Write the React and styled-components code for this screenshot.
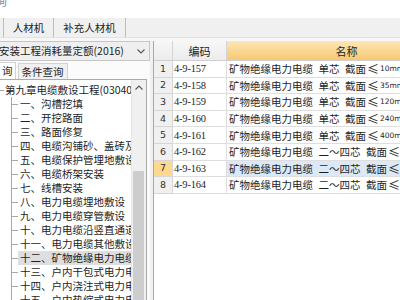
import styled, { createGlobalStyle } from 'styled-components'

const Global = createGlobalStyle`
    html, body {
        margin: 0;
        padding: 0;
        background: #fff;
    }
    * {
        box-sizing: border-box;
    }
`

const SPage = styled.div`
    width: 400px;
    height: 300px;
    overflow: hidden;
    display: flex;
    flex-direction: column;
    background: #f7f7f7;
    font-family: "Noto Sans CJK SC", "Noto Sans", sans-serif;
    font-size: 10.5px;
    color: #1e1e1e;
`

const STitleBar = styled.div`
    height: 18px;
    flex-shrink: 0;
    background: #fff;
    overflow: hidden;
`

const STitleText = styled.span`
    display: block;
    margin: -7px 0 0 -5px;
    font-size: 12px;
    line-height: 16px;
    color: #7d8ea6;
`

const SToolbar = styled.div`
    height: 20px;
    flex-shrink: 0;
    display: flex;
    background: #f0f0f0;
    border-bottom: 1px solid #e2e2e2;
`

const SToolTab = styled.div`
    width: ${props => props.w}px;
    display: flex;
    align-items: center;
    justify-content: center;
    border-right: 1px solid #bcbcbc;
    line-height: 20px;
    color: #222;
`

const SBody = styled.div`
    flex: 1;
    min-height: 0;
    display: flex;
    padding-top: 3px;
`

const SLeft = styled.div`
    width: 150px;
    flex-shrink: 0;
    display: flex;
    flex-direction: column;
    background: #fbfbfb;
`

const SCombo = styled.div`
    height: 20px;
    flex-shrink: 0;
    margin-left: -3px;
    display: flex;
    align-items: center;
    justify-content: space-between;
    padding: 0 4px 0 1px;
    background: #efefef;
    border: 1px solid #c6c6c6;
    white-space: nowrap;
    line-height: 18px;
`

const SQueryTabs = styled.div`
    height: 18px;
    flex-shrink: 0;
    display: flex;
    align-items: flex-end;
`

const SQueryTab = styled.div`
    height: ${props => (props.active ? 17 : 16)}px;
    display: flex;
    align-items: center;
    padding: 0 ${props => (props.active ? 2 : 3)}px;
    margin-right: 2px;
    background: ${props => (props.active ? '#fff' : '#f0f0f0')};
    border: 1px solid #d2d2d2;
    border-bottom: none;
    border-left: ${props => (props.active ? 'none' : '1px solid #d2d2d2')};
    line-height: 16px;
`

const STreeBox = styled.div`
    flex: 1;
    min-height: 0;
    margin: 0 3px 0 -1px;
    display: flex;
    background: #fff;
    border: 1px solid #aaaaaa;
    border-bottom: none;
`

const STree = styled.div`
    flex: 1;
    min-width: 0;
    overflow: hidden;
    padding-top: 3px;
`

const STreeRow = styled.div`
    height: 14px;
    display: flex;
    align-items: stretch;
    white-space: nowrap;
    line-height: 14px;
`

const SBranch = styled.span`
    flex-shrink: 0;
    width: ${props => (props.root ? 4 : 7)}px;
    margin-left: ${props => (props.root ? 0 : 11)}px;
    border-left: ${props => (props.root ? 'none' : '1px solid #a8a8a8')};
    background: linear-gradient(#a8a8a8, #a8a8a8) no-repeat left center / 100% 1px;
`

const SLabel = styled.span`
    padding: 0 2px 0 ${props => (props.root ? 1 : 2)}px;
    background: ${props => (props.selected ? '#dedede' : 'transparent')};
`

const SScroll = styled.div`
    width: 15px;
    flex-shrink: 0;
    display: flex;
    flex-direction: column;
    background: #f0f0f0;
    border-left: 1px solid #e6e6e6;
`

const SScrollArrow = styled.div`
    height: 15px;
    display: flex;
    align-items: center;
    justify-content: center;
`

const SThumb = styled.div`
    flex: 1;
    margin: 76px 2px 0 1px;
    background: #cdcdcd;
`

const SSplitter = styled.div`
    width: 3px;
    flex-shrink: 0;
    background: #f0f0f0;
`

const SRight = styled.div`
    flex: 1;
    min-width: 0;
    overflow: hidden;
    background: #fff;
    border-left: 1px solid #a9a9a9;
`

const STable = styled.div`
    display: grid;
    grid-template-columns: 19px 54px 240px;
    grid-auto-rows: 16.6px;
    grid-template-rows: 20px;
`

const SHeadCell = styled.div`
    display: flex;
    align-items: center;
    justify-content: center;
    border-right: 1px solid #d4d4d4;
    border-bottom: 1px solid #d0d0d0;
    background: ${props => props.active
        ? 'linear-gradient(#fde7b4, #f6c872)'
        : 'linear-gradient(#f7f7f7, #ececec)'};
    white-space: nowrap;
    font-size: 11px;
`

const SNumCell = styled.div`
    display: flex;
    align-items: center;
    justify-content: center;
    background: ${props => (props.active ? '#fdd88d' : '#f0f0f0')};
    border-right: 1px solid #d6d6d6;
    border-bottom: 1px solid #d6d6d6;
    font-family: "DejaVu Sans", sans-serif;
    font-size: 9.5px;
    line-height: 12px;
    color: #333;
`

const SCell = styled.div`
    display: flex;
    align-items: center;
    padding-left: ${props => props.pad}px;
    overflow: hidden;
    white-space: nowrap;
    background: ${props => (props.active ? '#dbe8f6' : '#fff')};
    border-right: 1px solid #dedede;
    border-bottom: 1px solid #dedede;
    line-height: 15px;
`

const SCode = styled.span`
    font-family: "Liberation Serif", serif;
    font-size: 10.5px;
    letter-spacing: -0.2px;
`

const SWord = styled.span`
    margin-left: 5.5px;
`

const SLe = styled.span`
    font-size: 12px;
    margin-left: 1px;
`

const SSmall = styled.span`
    font-family: "DejaVu Sans", sans-serif;
    font-size: 7.5px;
    margin-left: 1px;
`

const Chevron = ({up}) => (
    <svg width="8" height="5" viewBox="0 0 8 5">
        <path d={up ? 'M0.5 4.5 L4 1 L7.5 4.5' : 'M0.5 0.5 L4 4 L7.5 0.5'} fill="none" stroke="#555" strokeWidth="1.1" />
    </svg>
)

const treeItems = [
    '一、沟槽挖填',
    '二、开挖路面',
    '三、路面修复',
    '四、电缆沟铺砂、盖砖及移动盖板',
    '五、电缆保护管埋地敷设',
    '六、电缆桥架安装',
    '七、线槽安装',
    '八、电力电缆埋地敷设',
    '九、电力电缆穿管敷设',
    '十、电力电缆沿竖直通道敷设',
    '十一、电力电缆其他敷设',
    '十二、矿物绝缘电力电缆',
    '十三、户内干包式电力电缆头',
    '十四、户内浇注式电力电缆头',
    '十五、户内热缩式电力电缆头',
]

const rows = [
    {code: '4-9-157', core: '单芯', size: '10mm2'},
    {code: '4-9-158', core: '单芯', size: '35mm2'},
    {code: '4-9-159', core: '单芯', size: '120mm2'},
    {code: '4-9-160', core: '单芯', size: '240mm2'},
    {code: '4-9-161', core: '单芯', size: '400mm2'},
    {code: '4-9-162', core: '二～四芯', size: '6mm2'},
    {code: '4-9-163', core: '二～四芯', size: '16mm2'},
    {code: '4-9-164', core: '二～四芯', size: '25mm2'},
]

const App = () => {
    const tree = treeItems.map((text, i) => (
        <STreeRow key={text}>
            <SBranch />
            <SLabel selected={i === 11}>{text}</SLabel>
        </STreeRow>
    ))

    const body = rows.map(({code, core, size}, i) => {
        const active = i === 6
        return [
            <SNumCell key={`n${i}`} active={active}>{i + 1}</SNumCell>,
            <SCell key={`c${i}`} pad={1}><SCode>{code}</SCode></SCell>,
            <SCell key={`m${i}`} pad={2} active={active}>
                矿物绝缘电力电缆<SWord>{core}</SWord><SWord>截面</SWord><SLe>≤</SLe><SSmall>{size}</SSmall>
            </SCell>,
        ]
    })

    return (
        <SPage>
            <Global />
            <STitleBar>
                <STitleText>询</STitleText>
            </STitleBar>
            <SToolbar>
                <SToolTab w={4} />
                <SToolTab w={50}>人材机</SToolTab>
                <SToolTab w={72}>补充人材机</SToolTab>
            </SToolbar>
            <SBody>
                <SLeft>
                    <SCombo>
                        <span>安装工程消耗量定额(2016)</span>
                        <Chevron />
                    </SCombo>
                    <SQueryTabs>
                        <SQueryTab active>询</SQueryTab>
                        <SQueryTab>条件查询</SQueryTab>
                    </SQueryTabs>
                    <STreeBox>
                        <STree>
                            <STreeRow>
                                <SBranch root />
                                <SLabel root>第九章电缆敷设工程(030408)</SLabel>
                            </STreeRow>
                            {tree}
                        </STree>
                        <SScroll>
                            <SScrollArrow><Chevron up /></SScrollArrow>
                            <SThumb />
                        </SScroll>
                    </STreeBox>
                </SLeft>
                <SSplitter />
                <SRight>
                    <STable>
                        <SHeadCell />
                        <SHeadCell>编码</SHeadCell>
                        <SHeadCell active>名称</SHeadCell>
                        {body}
                    </STable>
                </SRight>
            </SBody>
        </SPage>
    )
}

export default App
